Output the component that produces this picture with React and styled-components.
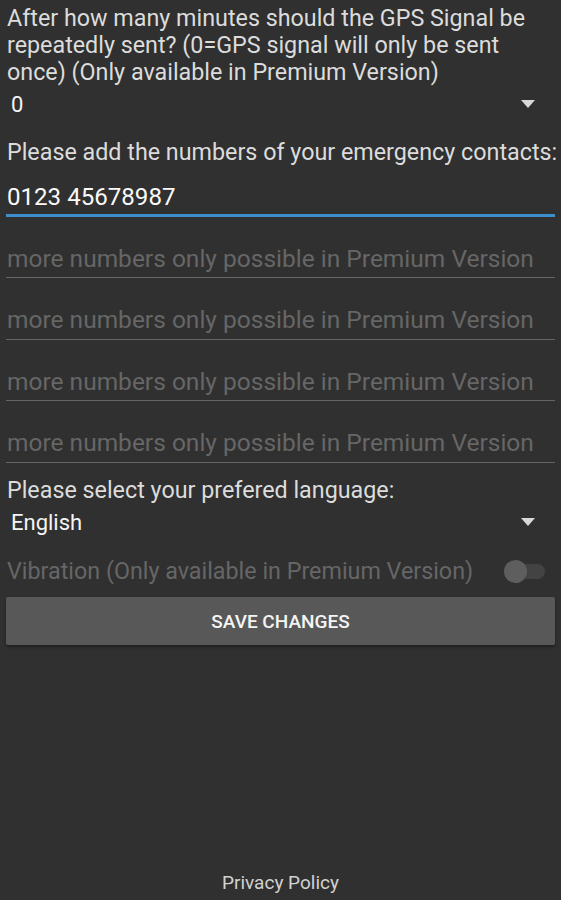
import React from "react";
import styled, { createGlobalStyle } from "styled-components";

const Global = createGlobalStyle`
  html, body { margin: 0; padding: 0; background: #303030; }
  body { font-family: Roboto, "Noto Sans", sans-serif; }
  #root { min-height: 900px; }
`;

const Page = styled.div`
  width: 561px;
  height: 900px;
  box-sizing: border-box;
  padding: 5px 6px 0 6px;
  display: flex;
  flex-direction: column;
  color: #e6e6e6;
`;

const Label = styled.div`
  font-size: 23.3px;
  line-height: 27px;
  color: ${(p) => (p.$disabled ? "#666666" : "#dcdcdc")};
  padding-left: 1px;
  margin-top: ${(p) => p.$mt || 0}px;
  white-space: ${(p) => (p.$nowrap ? "nowrap" : "normal")};
`;

const SelectRow = styled.div`
  display: flex;
  align-items: center;
  justify-content: space-between;
  height: ${(p) => p.$h || 36}px;
  flex-shrink: 0;
  padding: 0 20px 0 5px;
  font-size: 22px;
  color: #f4f4f4;
`;

const Arrow = styled.span`
  width: 0;
  height: 0;
  border-left: 7px solid transparent;
  border-right: 7px solid transparent;
  border-top: 8px solid #d8d8d8;
`;

const Field = styled.div`
  height: ${(p) => p.$h || 61.5}px;
  flex-shrink: 0;
  box-sizing: border-box;
  display: flex;
  align-items: flex-end;
  padding: 0 0 ${(p) => (p.$active ? 3 : 4.5)}px 1px;
  font-size: ${(p) => (p.$active ? 24.1 : 24.5)}px;
  line-height: 28px;
  color: ${(p) => (p.$placeholder ? "#666666" : "#fafafa")};
  border-bottom: ${(p) => (p.$active ? "3px solid #3d8fcb" : "1.5px solid #656565")};
  white-space: nowrap;
`;

const ToggleRow = styled.div`
  display: flex;
  align-items: center;
  justify-content: space-between;
  height: 56.5px;
  flex-shrink: 0;
  box-sizing: border-box;
  padding: 4.5px 10px 0 0;
`;

const Track = styled.div`
  position: relative;
  width: 38px;
  height: 15px;
  border-radius: 7.5px;
  background: #434343;
`;

const Knob = styled.div`
  position: absolute;
  left: -3px;
  top: -4px;
  width: 23px;
  height: 23px;
  border-radius: 50%;
  background: #5e5e5e;
`;

const Button = styled.div`
  height: 48px;
  flex-shrink: 0;
  border-radius: 2px;
  background: #585858;
  box-shadow: 0 2px 3px rgba(0, 0, 0, 0.35);
  display: flex;
  align-items: center;
  justify-content: center;
  font-size: 19px;
  font-weight: 500;
  color: #f4f4f4;
`;

const Spacer = styled.div`
  flex: 1;
`;

const Footer = styled.div`
  text-align: center;
  font-size: 19px;
  line-height: 24px;
  color: #d2d2d2;
  padding-bottom: 5px;
`;

export default function App() {
  return (
    <>
      <Global />
      <Page>
        <Label>
          After how many minutes should the GPS Signal be repeatedly sent? (0=GPS signal will
          only be sent once) (Only available in Premium Version)
        </Label>
        <SelectRow $h={36}>
          <span>0</span>
          <Arrow />
        </SelectRow>
        <Label $mt={16.5} $nowrap>Please add the numbers of your emergency contacts:</Label>
        <Field $active $h={51}>0123 45678987</Field>
        <Field $placeholder>more numbers only possible in Premium Version</Field>
        <Field $placeholder>more numbers only possible in Premium Version</Field>
        <Field $placeholder>more numbers only possible in Premium Version</Field>
        <Field $placeholder>more numbers only possible in Premium Version</Field>
        <Label $mt={14}>Please select your prefered language:</Label>
        <SelectRow $h={37}>
          <span>English</span>
          <Arrow />
        </SelectRow>
        <ToggleRow>
          <Label $disabled>Vibration (Only available in Premium Version)</Label>
          <Track>
            <Knob />
          </Track>
        </ToggleRow>
        <Button>SAVE CHANGES</Button>
        <Spacer />
        <Footer>Privacy Policy</Footer>
      </Page>
    </>
  );
}
